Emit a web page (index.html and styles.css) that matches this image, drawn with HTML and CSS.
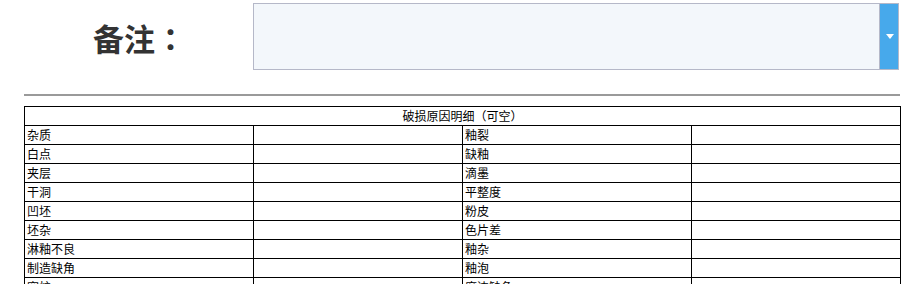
FILE: index.html
```html
<!DOCTYPE html>
<html lang="zh">
<head>
<meta charset="utf-8">
<link rel="stylesheet" href="styles.css">
</head>
<body>
<div class="remark">
  <div class="remark-label" lang="zh-TW">备注：</div>
  <div class="combo">
    <div class="combo-field"></div>
    <div class="combo-trigger"><span class="arrow"></span></div>
  </div>
</div>
<div class="divider"></div>
<table class="detail">
  <colgroup>
    <col class="c-wide"><col class="c-narrow"><col class="c-wide"><col class="c-narrow">
  </colgroup>
  <tr><td colspan="4" class="title">破损原因明细（可空）</td></tr>
  <tr><td>杂质</td><td></td><td>釉裂</td><td></td></tr>
  <tr><td>白点</td><td></td><td>缺釉</td><td></td></tr>
  <tr><td>夹层</td><td></td><td>滴墨</td><td></td></tr>
  <tr><td>干洞</td><td></td><td>平整度</td><td></td></tr>
  <tr><td>凹坯</td><td></td><td>粉皮</td><td></td></tr>
  <tr><td>坯杂</td><td></td><td>色片差</td><td></td></tr>
  <tr><td>淋釉不良</td><td></td><td>釉杂</td><td></td></tr>
  <tr><td>制造缺角</td><td></td><td>釉泡</td><td></td></tr>
  <tr><td>窑炉</td><td></td><td>磨边缺角</td><td></td></tr>
</table>
</body>
</html>
```
FILE: styles.css
```css
html, body {
  margin: 0;
  padding: 0;
  background: #fff;
}
body {
  font-family: "Noto Sans CJK SC", "Noto Sans", sans-serif;
  width: 923px;
  height: 284px;
  overflow: hidden;
}
.remark {
  display: flex;
  padding: 3px 0 0 24px;
  height: 68px;
}
.remark-label {
  width: 229px;
  display: flex;
  align-items: center;
  justify-content: center;
  font-family: "Noto Sans CJK TC", "Noto Sans CJK SC", sans-serif;
  font-size: 31px;
  font-weight: bold;
  color: #333;
  padding-left: 2px;
  box-sizing: border-box;
}
.combo {
  display: flex;
  width: 646px;
  height: 67px;
  box-sizing: border-box;
  border: 1px solid #b5b8c8;
}
.combo-field {
  flex: 1;
  background: #f3f7fb;
}
.combo-trigger {
  width: 18px;
  background: #47a9eb;
  border-left: 1px solid #b5b8c8;
  display: flex;
  align-items: center;
  justify-content: center;
}
.arrow {
  width: 0;
  height: 0;
  border-left: 4px solid transparent;
  border-right: 4px solid transparent;
  border-top: 5px solid #fff;
  margin-left: 1px;
}
.divider {
  margin: 23px 0 0 24px;
  width: 876px;
  height: 2px;
  background: #9a9a9a;
}
.detail {
  margin: 10px 0 0 24px;
  width: 877px;
  border-collapse: collapse;
  table-layout: fixed;
  font-size: 12px;
  color: #000;
}
.c-wide { width: 229px; }
.c-narrow { width: 209px; }
.detail td {
  border: 1px solid #000;
  height: 18px;
  padding: 0 0 0 2px;
  line-height: 18px;
  white-space: nowrap;
  overflow: hidden;
}
.detail td.title {
  text-align: center;
  padding: 0;
}
```
